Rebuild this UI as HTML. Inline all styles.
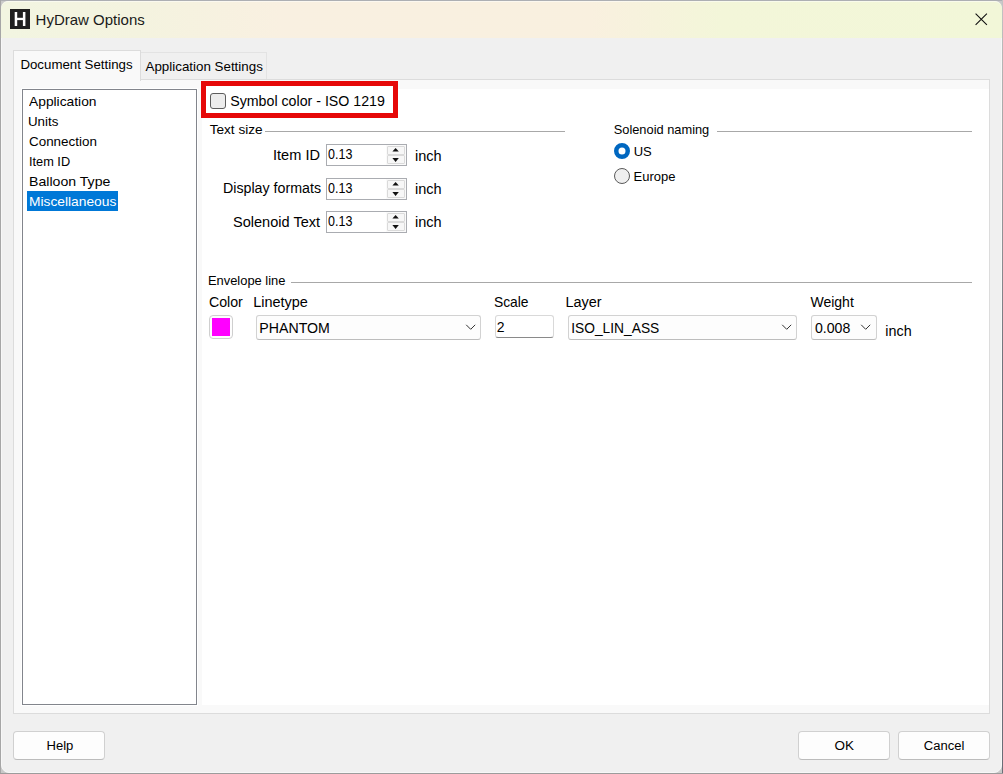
<!DOCTYPE html>
<html><head><meta charset="utf-8"><style>
html,body{margin:0;padding:0}
body{width:1003px;height:774px;position:relative;overflow:hidden;background:#c9c9c9;font-family:'Liberation Sans', sans-serif}
div,span,svg{position:absolute}
span{line-height:1;white-space:pre}
.win{left:1px;top:1px;width:1001px;height:772px;box-sizing:border-box;border:1px solid #f7f7f7;border-radius:8px;background:#f0f0f0}
</style></head><body>
<div style="left:0px;top:0px;width:1003px;height:1px;background:#adafb3"></div>
<div style="left:0px;top:0px;width:1px;height:774px;background:#a6a6a6"></div>
<div style="left:1002px;top:0px;width:1px;height:774px;background:linear-gradient(#c4c4c4 0px,#aaaaaa 110px,#8e8f93 250px,#71747c 360px,#6a6d77 774px)"></div>
<div style="left:0px;top:773px;width:1003px;height:1px;background:#9c9c9c"></div>
<div class="win"></div>
<div style="left:1px;top:1px;width:1001px;height:37px;border-top:1px solid rgba(255,255,255,.5);box-sizing:border-box;background:linear-gradient(90deg,#f2f5e1 0px,#f4f3df 140px,#f9f0e1 280px,#f9f0df 590px,#f3f6d9 720px,#f2f7d8 1001px);border-radius:7px 7px 0 0"></div>
<svg style="position:absolute;left:10px;top:9px" width="20" height="20"><rect width="20" height="20" fill="#202020"/><rect x="4.7" y="3" width="2.5" height="14" fill="#fff"/><rect x="12.9" y="3" width="2.5" height="14" fill="#fff"/><rect x="7" y="8.8" width="6" height="2.3" fill="#fff"/></svg>
<svg style="position:absolute;left:970px;top:8px" width="22" height="22"><path d="M5.6 5.6L16.9 16.9M16.9 5.6L5.6 16.9" stroke="#111" stroke-width="1.1"/></svg>
<div style="left:140px;top:52px;width:127px;height:28px;background:#f0f0f0;border:1px solid #e3e3e3;border-bottom:none;box-sizing:border-box"></div>
<div style="left:13px;top:79px;width:977px;height:635px;background:#f9f9f9;border:1px solid #dcdcdc;box-sizing:border-box"></div>
<div style="left:13px;top:50px;width:128px;height:31px;background:#f9f9f9;border:1px solid #dcdcdc;border-bottom:none;box-sizing:border-box"></div>
<div style="left:21px;top:88px;width:177px;height:618px;background:#fff"></div>
<div style="left:22px;top:89px;width:175px;height:616px;background:#fff;border:1px solid #82858c;box-sizing:border-box"></div>
<div style="left:27px;top:191px;width:91px;height:20px;background:#0078d7"></div>
<div style="left:202px;top:89px;width:787px;height:616px;background:#fff"></div>
<div style="left:201px;top:81px;width:197px;height:37px;border:5px solid #e60808;box-sizing:border-box;background:#fff"></div>
<div style="left:210px;top:93px;width:16px;height:16px;border:1px solid #5c5c5c;border-radius:3px;background:#ececec;box-sizing:border-box"></div>
<div style="left:265px;top:131px;width:300px;height:1px;background:#a8a8a8"></div>
<div style="left:717px;top:131px;width:255px;height:1px;background:#a8a8a8"></div>
<div style="left:291px;top:282px;width:681px;height:1px;background:#a8a8a8"></div>
<div style="left:326px;top:144px;width:81px;height:22px;border:1px solid #aaacb1;box-sizing:border-box;background:#fff"></div>
<div style="left:386px;top:145px;width:20px;height:20px;background:#fafafa"></div>
<div style="left:387px;top:146px;width:18px;height:9px;background:#f7f7f7;border:1px solid #dadada;box-sizing:border-box;border-radius:1px"></div>
<div style="left:387px;top:155px;width:18px;height:9px;background:#f7f7f7;border:1px solid #dadada;box-sizing:border-box;border-radius:1px"></div>
<svg style="position:absolute;left:387px;top:144px" width="18" height="22"><path d="M5.4 7.6L8.6 4L11.8 7.6Z" fill="#111"/><path d="M5.4 14L8.6 17.9L11.8 14Z" fill="#111"/></svg>
<div style="left:326px;top:178px;width:81px;height:22px;border:1px solid #aaacb1;box-sizing:border-box;background:#fff"></div>
<div style="left:386px;top:179px;width:20px;height:20px;background:#fafafa"></div>
<div style="left:387px;top:180px;width:18px;height:9px;background:#f7f7f7;border:1px solid #dadada;box-sizing:border-box;border-radius:1px"></div>
<div style="left:387px;top:189px;width:18px;height:9px;background:#f7f7f7;border:1px solid #dadada;box-sizing:border-box;border-radius:1px"></div>
<svg style="position:absolute;left:387px;top:178px" width="18" height="22"><path d="M5.4 7.6L8.6 4L11.8 7.6Z" fill="#111"/><path d="M5.4 14L8.6 17.9L11.8 14Z" fill="#111"/></svg>
<div style="left:326px;top:211px;width:81px;height:22px;border:1px solid #aaacb1;box-sizing:border-box;background:#fff"></div>
<div style="left:386px;top:212px;width:20px;height:20px;background:#fafafa"></div>
<div style="left:387px;top:213px;width:18px;height:9px;background:#f7f7f7;border:1px solid #dadada;box-sizing:border-box;border-radius:1px"></div>
<div style="left:387px;top:222px;width:18px;height:9px;background:#f7f7f7;border:1px solid #dadada;box-sizing:border-box;border-radius:1px"></div>
<svg style="position:absolute;left:387px;top:211px" width="18" height="22"><path d="M5.4 7.6L8.6 4L11.8 7.6Z" fill="#111"/><path d="M5.4 14L8.6 17.9L11.8 14Z" fill="#111"/></svg>
<svg style="position:absolute;left:613px;top:142px" width="18" height="18"><circle cx="9" cy="9" r="5.75" fill="#fff" stroke="#0067c0" stroke-width="4.5"/></svg>
<svg style="position:absolute;left:613px;top:167px" width="18" height="18"><circle cx="9" cy="9" r="7.5" fill="#efefef" stroke="#5a5a5a" stroke-width="1"/></svg>
<div style="left:209px;top:315px;width:24px;height:24px;border:1px solid #cfcfcf;border-radius:4px;background:#fdfdfd;box-sizing:border-box"></div>
<div style="left:212px;top:318px;width:18px;height:18px;background:#ff00ff"></div>
<div style="left:256px;top:315px;width:225px;height:25px;border:1px solid #d2d2d2;border-bottom-color:#bdbdbd;border-radius:3px;background:#fdfdfd;box-sizing:border-box"></div>
<div style="left:568px;top:315px;width:229px;height:25px;border:1px solid #d2d2d2;border-bottom-color:#bdbdbd;border-radius:3px;background:#fdfdfd;box-sizing:border-box"></div>
<div style="left:811px;top:315px;width:66px;height:25px;border:1px solid #d2d2d2;border-bottom-color:#bdbdbd;border-radius:3px;background:#fdfdfd;box-sizing:border-box"></div>
<svg style="position:absolute;left:465px;top:322px" width="12" height="10"><path d="M1.2 2.8L5.7 7.3L10.2 2.8" fill="none" stroke="#333" stroke-width="1"/></svg>
<svg style="position:absolute;left:781px;top:322px" width="12" height="10"><path d="M1.2 2.8L5.7 7.3L10.2 2.8" fill="none" stroke="#333" stroke-width="1"/></svg>
<svg style="position:absolute;left:860px;top:322px" width="12" height="10"><path d="M1.2 2.8L5.7 7.3L10.2 2.8" fill="none" stroke="#333" stroke-width="1"/></svg>
<div style="left:495px;top:315px;width:59px;height:23px;border:1px solid #d9d9d9;border-bottom:1px solid #8a8a8a;border-radius:3px;background:#fff;box-sizing:border-box"></div>
<div style="left:13px;top:731px;width:92px;height:29px;border:1px solid #d0d0d0;border-bottom-color:#bcbcbc;border-radius:4px;background:#fdfdfd;box-sizing:border-box"></div>
<div style="left:798px;top:731px;width:92px;height:29px;border:1px solid #d0d0d0;border-bottom-color:#bcbcbc;border-radius:4px;background:#fdfdfd;box-sizing:border-box"></div>
<div style="left:898px;top:731px;width:92px;height:29px;border:1px solid #d0d0d0;border-bottom-color:#bcbcbc;border-radius:4px;background:#fdfdfd;box-sizing:border-box"></div>
<span style="left:35.6px;top:12.0px;font-size:15.0px;color:#1a1a1a">HyDraw Options</span>
<span style="left:20.4px;top:58.0px;font-size:13.29px;color:#000">Document Settings</span>
<span style="left:145.5px;top:60.0px;font-size:13.37px;color:#000">Application Settings</span>
<span style="left:28.9px;top:95.0px;font-size:13.6px;color:#000;transform:scaleX(1.015);transform-origin:0 0">Application</span>
<span style="left:28.4px;top:115.0px;font-size:13.6px;color:#000;transform:scaleX(0.98);transform-origin:0 0">Units</span>
<span style="left:28.6px;top:135.0px;font-size:13.6px;color:#000;transform:scaleX(0.987);transform-origin:0 0">Connection</span>
<span style="left:28.5px;top:155.0px;font-size:13.6px;color:#000;transform:scaleX(0.938);transform-origin:0 0">Item ID</span>
<span style="left:28.6px;top:175.0px;font-size:13.6px;color:#000;transform:scaleX(1.038);transform-origin:0 0">Balloon Type</span>
<span style="left:28.6px;top:195.0px;font-size:13.6px;color:#fff;transform:scaleX(1.014);transform-origin:0 0">Miscellaneous</span>
<span style="left:230.2px;top:94.0px;font-size:14.21px;color:#000">Symbol color - ISO 1219</span>
<span style="left:209.7px;top:123.0px;font-size:13.61px;color:#000">Text size</span>
<span style="left:273.2px;top:149.0px;font-size:13.8px;color:#000;transform:scaleX(1.056);transform-origin:0 0">Item ID</span>
<span style="left:222.8px;top:182.0px;font-size:13.8px;color:#000;transform:scaleX(1.031);transform-origin:0 0">Display formats</span>
<span style="left:233.0px;top:216.0px;font-size:13.8px;color:#000;transform:scaleX(1.054);transform-origin:0 0">Solenoid Text</span>
<span style="left:327.9px;top:147.0px;font-size:14px;color:#000;transform:scaleX(0.893);transform-origin:0 0">0.13</span>
<span style="left:327.9px;top:181.0px;font-size:14px;color:#000;transform:scaleX(0.893);transform-origin:0 0">0.13</span>
<span style="left:327.9px;top:214.0px;font-size:14px;color:#000;transform:scaleX(0.893);transform-origin:0 0">0.13</span>
<span style="left:414.6px;top:149.0px;font-size:14px;color:#000;transform:scaleX(1.038);transform-origin:0 0">inch</span>
<span style="left:414.6px;top:182.0px;font-size:14px;color:#000;transform:scaleX(1.038);transform-origin:0 0">inch</span>
<span style="left:414.6px;top:215.0px;font-size:14px;color:#000;transform:scaleX(1.038);transform-origin:0 0">inch</span>
<span style="left:613.7px;top:124.0px;font-size:12.84px;color:#000">Solenoid naming</span>
<span style="left:633.7px;top:145.0px;font-size:13px;color:#000">US</span>
<span style="left:633.6px;top:170.0px;font-size:13.0px;color:#000">Europe</span>
<span style="left:207.9px;top:275.0px;font-size:12.93px;color:#000">Envelope line</span>
<span style="left:208.9px;top:295.0px;font-size:14.21px;color:#000">Color</span>
<span style="left:253.2px;top:295.0px;font-size:14.48px;color:#000">Linetype</span>
<span style="left:493.9px;top:296.0px;font-size:13.87px;color:#000">Scale</span>
<span style="left:565.5px;top:295.0px;font-size:14.46px;color:#000">Layer</span>
<span style="left:810.4px;top:295.0px;font-size:14.04px;color:#000">Weight</span>
<span style="left:259.3px;top:321.0px;font-size:14.17px;color:#000">PHANTOM</span>
<span style="left:496.7px;top:320.0px;font-size:14px;color:#000">2</span>
<span style="left:571.2px;top:322.0px;font-size:13.79px;color:#000">ISO_LIN_ASS</span>
<span style="left:815.0px;top:321.0px;font-size:14.12px;color:#000">0.008</span>
<span style="left:885.3px;top:324.0px;font-size:14.35px;color:#000">inch</span>
<span style="left:46.5px;top:739.0px;font-size:13.07px;color:#000">Help</span>
<span style="left:834.6px;top:739.0px;font-size:13.49px;color:#000">OK</span>
<span style="left:923.8px;top:739.0px;font-size:13.03px;color:#000">Cancel</span>
</body></html>
